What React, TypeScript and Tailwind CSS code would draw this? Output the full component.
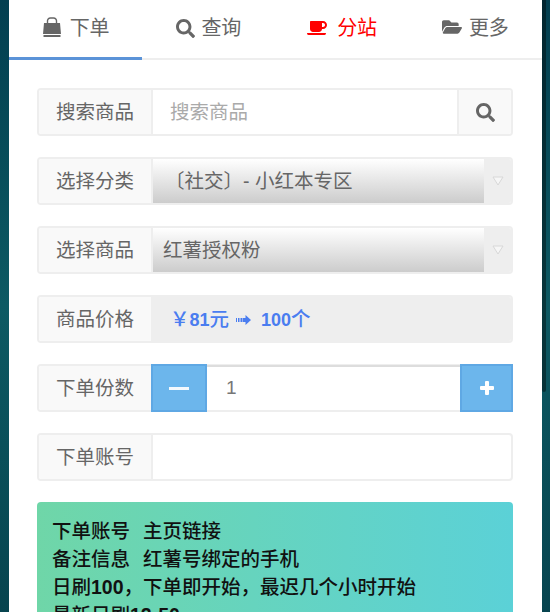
import React from 'react';
import { FaCoffee, FaFolderOpen, FaSearch } from 'react-icons/fa';

const font = 'font-["Liberation_Sans","Noto_Sans_CJK_SC",sans-serif]';

const BagIcon = () => (
  <svg viewBox="0 0 20 20" className="mb-[2px] h-[20px] w-[20px]" fill="#666">
    <path d="M1.500 18h17v2h-17zM2 6h16l1 11H1z" />
    <path d="M5.500 9V4.500a3 3 0 0 1 3-3.500h3a3 3 0 0 1 3 3.500V9" fill="none" stroke="#666" strokeWidth="1.4" />
  </svg>
);

const PriceArrow = () => (
  <svg viewBox="0 0 15 10" className="ml-[7px] mr-[10px] inline-block h-[10px] w-[15px]" fill="#4a7df0">
    <path d="M0 3h1v4H0zM2 3h1.500v4H2zM4.500 3h2v4h-2zM7 3h2.500V0L15 5l-5.500 5V7H7z" />
  </svg>
);

const Tab = ({ icon, label, active, red, gap }: { icon: React.ReactNode; label: string; active?: boolean; red?: boolean; gap: string }) => (
  <div
    className={`relative flex flex-1 items-center justify-center pb-[2px] text-[20px] ${gap} ${red ? 'text-[#ff0000]' : 'text-[#666]'}`}
  >
    {icon}
    <span>{label}</span>
    {active && <div className="absolute bottom-[-2px] left-0 right-0 h-[3px] bg-[#5b93d8]" />}
  </div>
);

const Addon = ({ children }: { children: React.ReactNode }) => (
  <div className="flex w-[114px] shrink-0 items-center justify-center rounded-l-[2px] border-r-2 border-[#eee] bg-[#f9f9f9] pt-[2px] text-[19.5px] text-[#666]">
    {children}
  </div>
);

const Row = ({ children }: { children: React.ReactNode }) => (
  <div className="flex h-[48px] rounded-[4px] border-2 border-[#eee] bg-white">{children}</div>
);

const SelectRow = ({ label, value, indent }: { label: string; value: string; indent: string }) => (
  <Row>
    <Addon>{label}</Addon>
    <div className={`flex flex-1 items-center bg-gradient-to-b from-white to-[#cccccc] pt-[2px] text-[19.5px] text-[#666] ${indent}`}>
      {value}
    </div>
    <div className="flex w-[27px] items-center justify-center rounded-r-[2px] bg-[#eee]">
      <svg viewBox="0 0 12 10" className="h-[10px] w-[12px]">
        <path d="M1 1h10L6 9z" fill="#f6f6f6" stroke="#d8d8d8" strokeWidth="1" />
      </svg>
    </div>
  </Row>
);

export default function App() {
  return (
    <div className={`relative flex h-[612px] w-[550px] overflow-hidden bg-gradient-to-b from-[#033f50] via-[#0d5a63] to-[#07444f] pl-[9px] pr-[8px] ${font}`}>
      <div className="flex h-full w-[533px] flex-col overflow-hidden bg-white">
        <div className="flex h-[60px] shrink-0 border-b-2 border-[#eee]">
          <Tab gap="gap-[8px]" icon={<BagIcon />} label="下单" active />
          <Tab gap="gap-[6px]" icon={<FaSearch className="h-[19px] w-[19px]" />} label="查询" />
          <Tab gap="gap-[10px]" red icon={<FaCoffee className="h-[20px] w-[20px]" />} label="分站" />
          <Tab gap="gap-[7px]" icon={<FaFolderOpen className="mb-[2px] h-[20px] w-[20px]" />} label="更多" />
        </div>
        <div className="flex flex-col gap-[21px] pl-[28px] pr-[29px] pt-[28px]">
          <Row>
            <Addon>搜索商品</Addon>
            <div className="flex flex-1 items-center pl-[17px] pt-[2px] text-[19.5px] text-[#aaa]">搜索商品</div>
            <div className="flex w-[54px] items-center justify-center rounded-r-[2px] border-l-2 border-[#eee] bg-[#f9f9f9] text-[#666]">
              <FaSearch className="h-[19px] w-[19px]" />
            </div>
          </Row>
          <SelectRow label="选择分类" value="〔社交〕- 小红本专区" indent="pl-[12px]" />
          <SelectRow label="选择商品" value="红薯授权粉" indent="pl-[10px]" />
          <Row>
            <Addon>商品价格</Addon>
            <div className="flex flex-1 items-center rounded-r-[2px] bg-[#eee] pl-[17px] pt-[2px] text-[19.5px] font-medium text-[#4a7df0]">
              ￥<span className="text-[18px] font-bold">81</span>元<PriceArrow />
              <span className="text-[18px] font-bold">100</span>个
            </div>
          </Row>
          <Row>
            <Addon>下单份数</Addon>
            <div className="my-[-2px] ml-[-2px] flex w-[56px] items-center justify-center border-2 border-[#5fa8e4] bg-[#6cb6ec]">
              <div className="h-[3px] w-[20px] bg-[#f4f9fd]" />
            </div>
            <div className="mt-[-1px] flex flex-1 items-center border-t-2 border-[#ddd] pl-[19px] text-[19px] text-[#777]">1</div>
            <div className="my-[-2px] mr-[-2px] flex w-[53px] items-center justify-center border-2 border-[#5fa8e4] bg-[#6cb6ec]">
              <svg viewBox="0 0 14 14" className="h-[14px] w-[14px]" fill="#fff">
                <path d="M5 1a1 1 0 0 1 1-1h2a1 1 0 0 1 1 1v4h4a1 1 0 0 1 1 1v2a1 1 0 0 1-1 1H9v4a1 1 0 0 1-1 1H6a1 1 0 0 1-1-1V9H1a1 1 0 0 1-1-1V6a1 1 0 0 1 1-1h4z" />
              </svg>
            </div>
          </Row>
          <Row>
            <Addon>下单账号</Addon>
            <div className="flex-1" />
          </Row>
          <div className="rounded-t-[4px] bg-gradient-to-r from-[#6fd6a8] to-[#5bd1d7] px-[15px] pt-[15px] text-[19.5px] font-medium leading-[28px] text-[#111]">
            <div>下单账号<span className="inline-block w-[13px]" />主页链接</div>
            <div>备注信息<span className="inline-block w-[13px]" />红薯号绑定的手机</div>
            <div>日刷<span className="font-bold">100</span>，下单即开始，最迟几个小时开始</div>
            <div>最新日刷<span className="font-bold">12-50</span></div>
          </div>
        </div>
      </div>
      <div className="absolute right-[4px] top-0 h-[392px] w-[4px] rounded-b-[2px] bg-black/40" />
    </div>
  );
}
